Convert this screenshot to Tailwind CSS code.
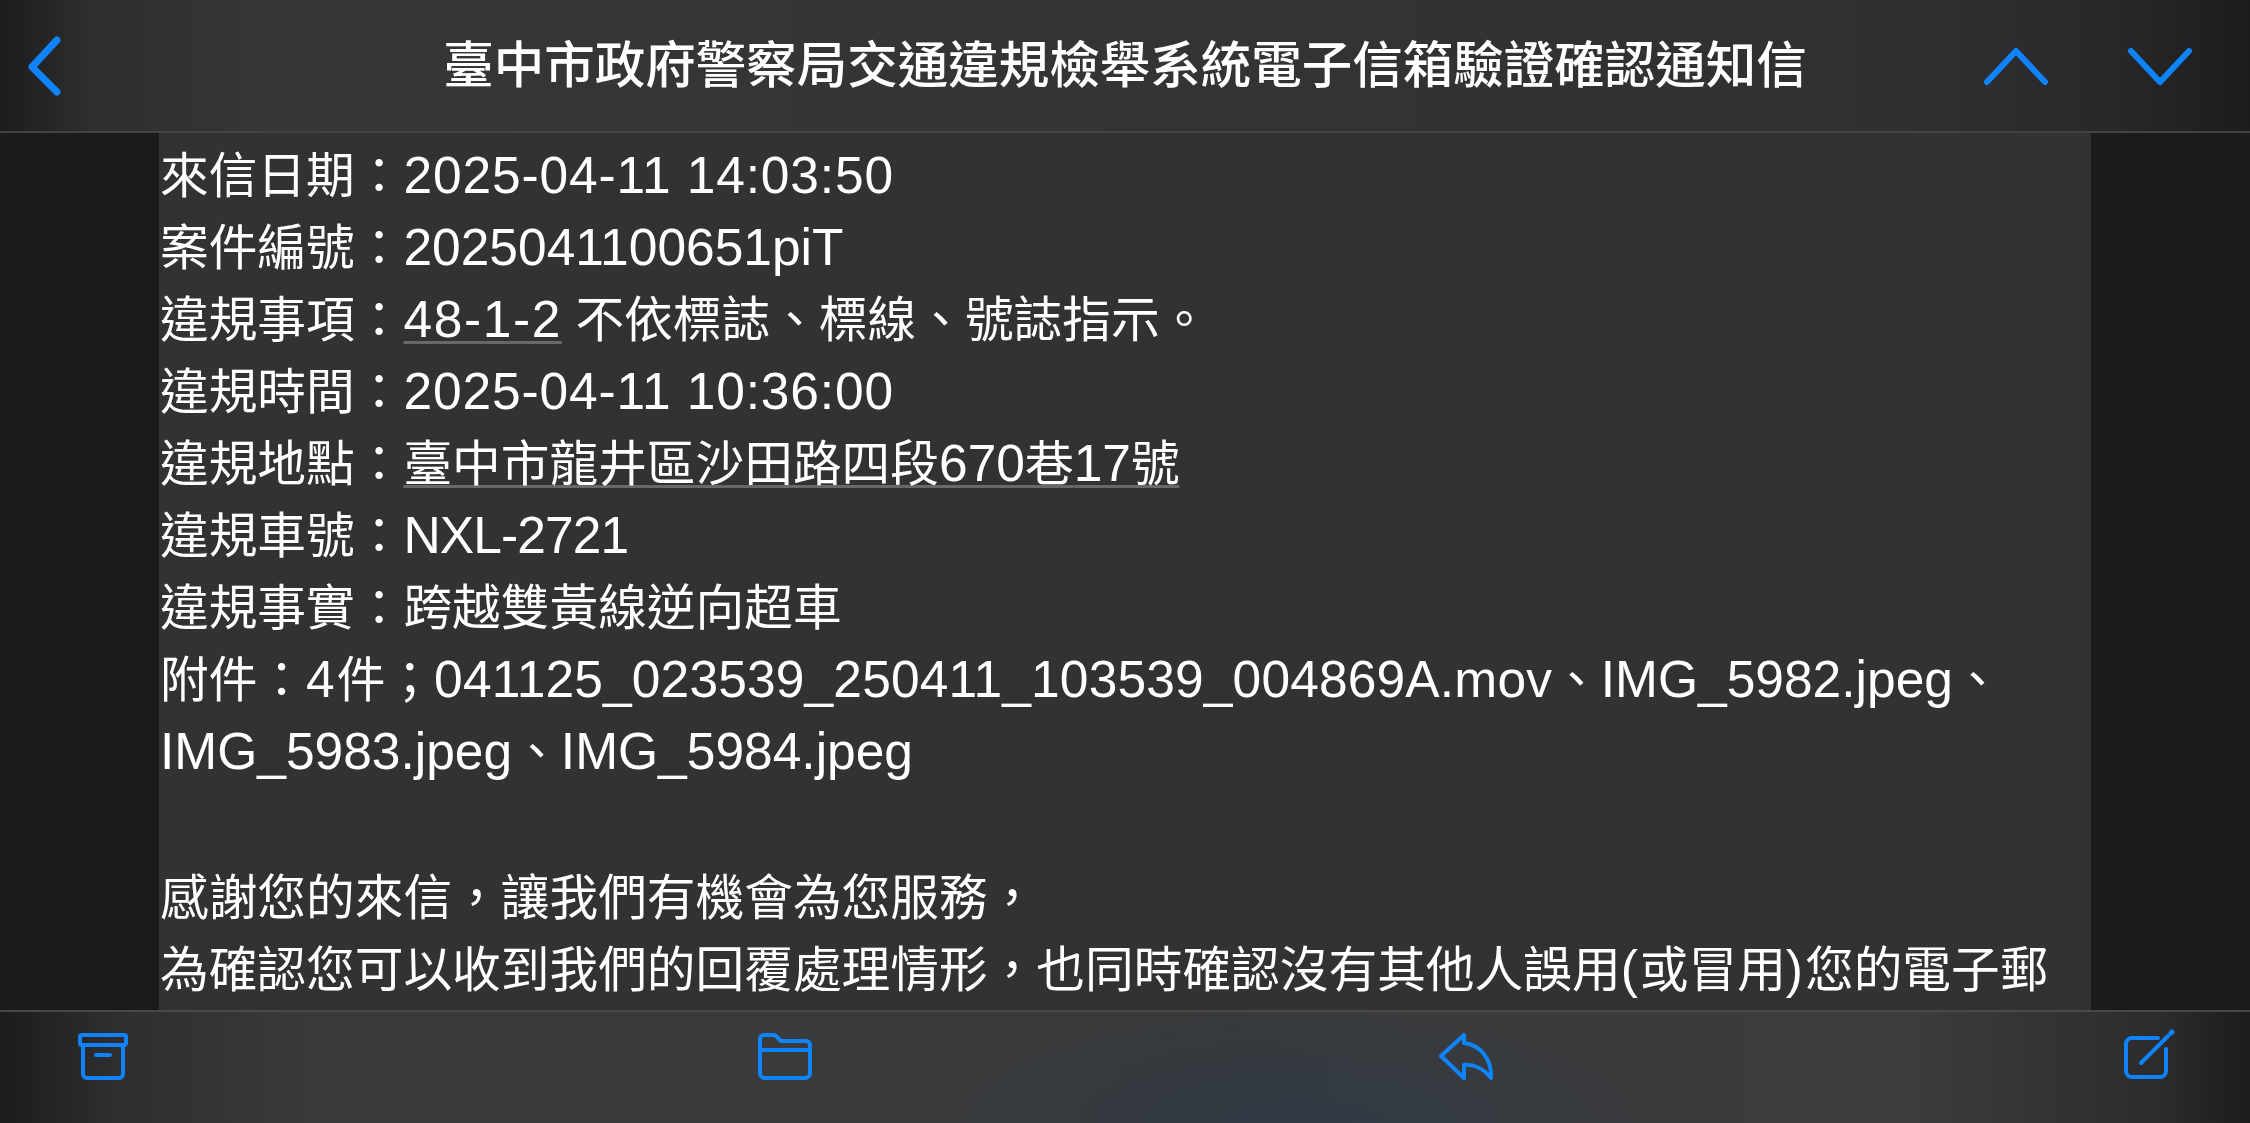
<!DOCTYPE html>
<html lang="zh-Hant">
<head>
<meta charset="utf-8">
<title>Mail</title>
<script src="https://cdn.jsdelivr.net/npm/@tailwindcss/browser@4"></script>
</head>
<body class="bg-[#1c1c1e] overflow-hidden">
<div class="w-[2250px] h-[1123px] flex flex-col text-white font-['Liberation_Sans','Noto_Sans_CJK_TC',sans-serif]">

    <!-- Top bar -->
    <header class="relative h-[133px] shrink-0 flex items-center justify-center border-b-2 border-[#434345] bg-[linear-gradient(90deg,#1c1c1e_0%,#2e2e30_4%,#363638_12%,#343436_50%,#303032_85%,#28282a_94%,#1c1c1e_100%)]">
        <svg class="absolute left-[20px] top-[28px] w-[50px] h-[76px]" fill="none" stroke="#0f84fa" stroke-width="7" stroke-linecap="round" stroke-linejoin="round" viewBox="0 0 50 76">
            <path d="M37 12 L12 39 L37 64"></path>
        </svg>
        <h1 class="text-[50.5px] font-medium leading-none whitespace-nowrap mt-[1px]">臺中市政府警察局交通違規檢舉系統電子信箱驗證確認通知信</h1>
        <svg class="absolute left-[1976px] top-[40px] w-[80px] h-[52px]" fill="none" stroke="#0f84fa" stroke-width="6" stroke-linecap="round" stroke-linejoin="round" viewBox="0 0 80 52">
            <path d="M11 42 L40 11 L69 42"></path>
        </svg>
        <svg class="absolute left-[2120px] top-[40px] w-[80px] h-[52px]" fill="none" stroke="#0f84fa" stroke-width="6" stroke-linecap="round" stroke-linejoin="round" viewBox="0 0 80 52">
            <path d="M11 11 L40 42 L69 11"></path>
        </svg>
    </header>

    <!-- Mail body -->
    <main class="flex-1 min-h-0 flex">
        <div class="w-[159px] shrink-0 bg-[#1b1b1d]"></div>
        <div class="w-[1932px] shrink-0 bg-[#323233] overflow-hidden pl-[1px] pt-[7px] text-[48.7px] leading-[72px] whitespace-nowrap">
            <div>來信日期：<span class="text-[51.5px] leading-none tracking-[0.85px]">2025-04-11 14:03:50</span></div>
            <div>案件編號：<span class="text-[51.5px] leading-none">2025041100651piT</span></div>
            <div>違規事項：<span class="text-[51.5px] leading-none tracking-[1.6px] underline decoration-[#68686a] decoration-[3px] underline-offset-[4px]">48-1-2</span> 不依標誌、標線、號誌指示。</div>
            <div>違規時間：<span class="text-[51.5px] leading-none tracking-[0.85px]">2025-04-11 10:36:00</span></div>
            <div>違規地點：<span class="underline decoration-[#68686a] decoration-[3px] underline-offset-[4px] [text-decoration-skip-ink:none]">臺中市龍井區沙田路四段<span class="text-[51.5px] leading-none">670</span>巷<span class="text-[51.5px] leading-none">17</span>號</span></div>
            <div>違規車號：<span class="text-[51.5px] leading-none tracking-[-0.9px]">NXL-2721</span></div>
            <div>違規事實：跨越雙黃線逆向超車</div>
            <div>附件：<span class="text-[51.5px] leading-none tracking-[2px]">4</span>件；<span class="text-[51.5px] leading-none tracking-[0.15px]">041125_023539_250411_103539_004869A.mov</span>、<span class="text-[51.5px] leading-none">IMG_5982.jpeg</span>、<br><span class="text-[51.5px] leading-none">IMG_5983.jpeg</span>、<span class="text-[51.5px] leading-none">IMG_5984.jpeg</span></div>
            <div class="h-[74px]"></div>
            <div>感謝您的來信，讓我們有機會為您服務，</div>
            <div>為確認您可以收到我們的回覆處理情形，也同時確認沒有其他人誤用<span class="text-[51.5px] leading-none tracking-[2px]">(</span>或冒用<span class="text-[51.5px] leading-none tracking-[2px]">)</span>您的電子郵</div>
        </div>
        <div class="flex-1 bg-[#1b1b1d]"></div>
    </main>

    <!-- Bottom toolbar -->
    <footer class="relative h-[113px] shrink-0 border-t-2 border-[#48484a] bg-[radial-gradient(ellipse_340px_110px_at_1300px_100%,#313a45_0%,transparent_100%),linear-gradient(90deg,#1c1c1e_0%,#2e2e30_5%,#3a3a3c_14%,#383a3c_55%,#3c3c3e_85%,#2c2c2e_96%,#1c1c1e_100%)]">
        <svg class="absolute left-[76px] top-[21px] w-[54px] h-[50px]" fill="none" stroke="#0f84fa" stroke-width="4" stroke-linejoin="round" stroke-linecap="round" viewBox="0 0 54 50">
            <rect x="4" y="2" width="46" height="10" rx="2"></rect>
            <path d="M7 12 V41 a4 4 0 0 0 4 4 H43 a4 4 0 0 0 4 -4 V12"></path>
            <path d="M20 22 H34"></path>
        </svg>
        <svg class="absolute left-[755px] top-[21px] w-[60px] h-[50px]" fill="none" stroke="#0f84fa" stroke-width="4" stroke-linejoin="round" viewBox="0 0 60 50">
            <path d="M5 17 V6 a4 4 0 0 1 4 -4 H18 q3 0 5 3 l3 3 H51 a4 4 0 0 1 4 4 V40 a5 5 0 0 1 -5 5 H10 a5 5 0 0 1 -5 -5 Z"></path>
            <path d="M5 17 H55"></path>
        </svg>
        <svg class="absolute left-[1437px] top-[21px] w-[58px] h-[50px]" fill="none" stroke="#0f84fa" stroke-width="4" stroke-linejoin="round" stroke-linecap="round" viewBox="0 0 58 50">
            <path d="M27 2 L4 23 L27 45 V32 C37 31 47 36 54 45 C55 27 44 12 27 10 Z"></path>
        </svg>
        <svg class="absolute left-[2120px] top-[17px] w-[58px] h-[54px]" fill="none" stroke="#0f84fa" stroke-width="4" stroke-linejoin="round" stroke-linecap="round" viewBox="0 0 58 54">
            <path d="M38 9 H12 a6 6 0 0 0 -6 6 V42 a6 6 0 0 0 6 6 H40 a6 6 0 0 0 6 -6 V20"></path>
            <path d="M21 34 L48 7"></path>
            <path d="M51 4 L52 3" stroke-width="5"></path>
        </svg>
    </footer>
</div>
</body>
</html>
